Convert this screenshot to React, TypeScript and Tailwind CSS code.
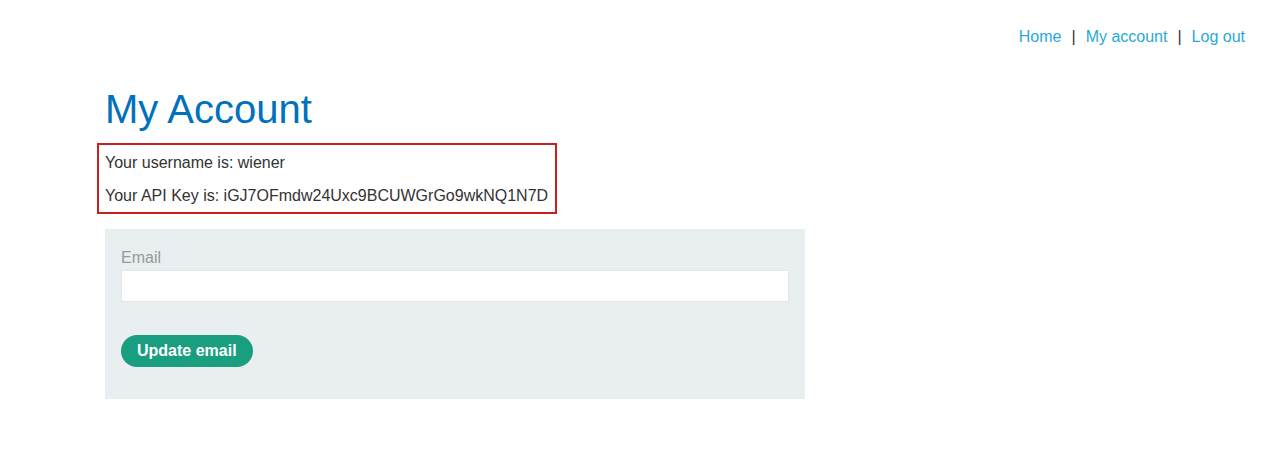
import React from 'react';

const App: React.FC = () => {
  return (
    <div className="min-h-[451px] bg-white text-[#333332] text-[16px] font-['Liberation_Sans',Arial,sans-serif]">
      <nav className="flex justify-end items-center pt-[27px] pr-[16px] leading-5">
        <a className="text-[#29a8d8]">Home</a>
        <span className="mx-[10px] text-[#333332]">|</span>
        <a className="text-[#29a8d8]">My account</a>
        <span className="mx-[10px] text-[#333332]">|</span>
        <a className="text-[#29a8d8]">Log out</a>
      </nav>

      <main className="pl-[105px] pt-[38px]">
        <h1 className="text-[40px] leading-[48px] text-[#0071bc]">My Account</h1>

        <div className="mt-[10px] -ml-[8px] w-[460px] border-2 border-[#c8201e] pl-[6px] pt-[8px] pb-[6px] flex flex-col gap-[13px] leading-5">
          <p>Your username is: wiener</p>
          <p>Your API Key is: iGJ7OFmdw24Uxc9BCUWGrGo9wkNQ1N7D</p>
        </div>

        <form className="mt-[15px] w-[700px] bg-[#e9eef1] px-[16px] pt-[19px] pb-[32px]">
          <label className="block leading-5 text-[#999999]">Email</label>
          <input
            type="email"
            className="mt-[2px] block w-full h-[32px] bg-white border border-[#e3e7ea] outline-none"
          />
          <button
            type="button"
            className="mt-[33px] h-[32px] px-[16px] rounded-full bg-[#1a9e80] text-white font-bold leading-5"
          >
            Update email
          </button>
        </form>
      </main>
    </div>
  );
};

export default App;
